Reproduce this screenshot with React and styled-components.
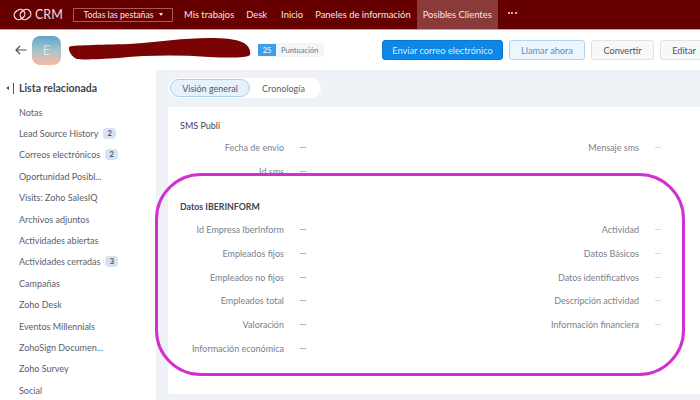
import React from 'react'
import styled, { createGlobalStyle } from 'styled-components'

const Global = createGlobalStyle`
  html, body { margin: 0; padding: 0; background: #fff; }
  * { box-sizing: border-box; }
  body { font-family: Lato, "Liberation Sans", sans-serif; }
`

const Page = styled.div`
  position: relative;
  width: 700px;
  height: 400px;
  overflow: hidden;
  display: flex;
  flex-direction: column;
`

const TopBar = styled.header`
  height: 30px;
  flex: none;
  background: #660000;
  border-bottom: 1px solid #c9a3a3;
  display: flex;
  align-items: stretch;
  padding-left: 13px;
  color: #f4e6e6;
  font-size: 9.4px;
`

const Brand = styled.div`
  display: flex;
  align-items: center;
  gap: 3px;
  width: 60px;
  flex: none;
  font-size: 12.5px;
  color: #f2dede;
  svg { display: block; }
`

const AllTabs = styled.div`
  align-self: center;
  flex: none;
  width: 100px;
  height: 14px;
  margin-right: 5px;
  border: 1px solid #a65a5a;
  display: flex;
  align-items: center;
  justify-content: center;
  gap: 5px;
  font-size: 8.7px;
  white-space: nowrap;
`

const Caret = styled.span`
  width: 0;
  height: 0;
  border-left: 2.5px solid transparent;
  border-right: 2.5px solid transparent;
  border-top: 3px solid #f4e6e6;
`

const NavItem = styled.div`
  display: flex;
  align-items: center;
  flex: none;
  padding: 0 6px;
  margin-right: ${p => p.$gap || 0}px;
  white-space: nowrap;
  background: ${p => (p.$active ? '#8b3a3a' : 'transparent')};
`

const More = styled.div`
  display: flex;
  align-items: center;
  margin: -3px 0 0 10px;
  gap: 1.5px;
  span { width: 2px; height: 2px; border-radius: 50%; background: #f4e6e6; }
`

const RecordBar = styled.div`
  height: 40px;
  flex: none;
  background: #fff;
  display: flex;
  align-items: center;
  padding-left: 15px;
`

const Back = styled.div`
  width: 17px;
  flex: none;
  color: #4a5160;
  display: flex;
  svg { display: block; }
`

const Avatar = styled.div`
  width: 29px;
  height: 29px;
  flex: none;
  border-radius: 8px;
  background: linear-gradient(180deg, #5aa5c8 0%, #a9c4c8 50%, #fbb79f 100%);
  color: rgba(255, 255, 255, 0.55);
  display: flex;
  align-items: center;
  justify-content: center;
  font-size: 13px;
`

const Blot = styled.svg`
  display: block;
  flex: none;
  margin-left: 8px;
  width: 183px;
  height: 26px;
`

const Score = styled.div`
  margin-left: 6px;
  flex: none;
  display: flex;
  align-items: center;
  height: 14px;
  background: #f2f5f9;
  border-radius: 2px;
  font-size: 7.5px;
  color: #6b7686;
  width: 66px;
`

const ScoreValue = styled.span`
  width: 18px;
  height: 12px;
  margin-right: 5px;
  background: #3d9fe8;
  color: #d9eefc;
  font-weight: 700;
  display: flex;
  align-items: center;
  justify-content: center;
`

const Actions = styled.div`
  display: flex;
  gap: 6px;
  margin-left: 58px;
  flex: none;
`

const Button = styled.div`
  height: 20px;
  width: ${p => p.$w}px;
  flex: none;
  border-radius: 3px;
  font-size: 9.2px;
  display: flex;
  align-items: center;
  justify-content: center;
  padding-right: ${p => p.$pr || 0}px;
  white-space: nowrap;
  background: ${p => p.$bg || '#f7f8fa'};
  color: ${p => p.$fg || '#4d5562'};
  border: 1px solid ${p => p.$line || '#dfe3e8'};
`

const Body = styled.div`
  flex: 1;
  display: flex;
  min-height: 0;
`

const Sidebar = styled.aside`
  width: 156px;
  flex: none;
  background: #fff;
  padding: 11px 0 0 19px;
`

const SideTitle = styled.div`
  position: relative;
  font-size: 10.5px;
  font-weight: 700;
  color: #3f4652;
  height: 15px;
  line-height: 15px;
  margin-bottom: 5.5px;
`

const Collapse = styled.span`
  position: absolute;
  left: -13px;
  top: 2px;
  width: 8px;
  height: 11px;
  border-right: 1px solid #4a5160;
  &::before {
    content: '';
    position: absolute;
    left: 0;
    top: 3px;
    border-top: 2.5px solid transparent;
    border-bottom: 2.5px solid transparent;
    border-right: 3px solid #4a5160;
  }
`

const SideItem = styled.div`
  height: 21.4px;
  display: flex;
  align-items: center;
  gap: 5px;
  font-size: 9px;
  color: #59606c;
  white-space: nowrap;
`

const Count = styled.span`
  width: 13px;
  height: 11px;
  border-radius: 4px;
  background: #d5e2f6;
  color: #47566e;
  font-size: 7.5px;
  font-weight: 700;
  display: flex;
  align-items: center;
  justify-content: center;
`

const Main = styled.main`
  flex: 1;
  background: #eef2f6;
  padding: 8px 0 6px 12px;
  display: flex;
  flex-direction: column;
  gap: 9px;
  min-width: 0;
`

const Tabs = styled.div`
  width: 153px;
  height: 20px;
  border-radius: 10px;
  background: #fff;
  display: flex;
  align-items: center;
  padding-left: 2px;
  font-size: 9px;
  color: #59606c;
  flex: none;
`

const Tab = styled.div`
  height: 18px;
  width: ${p => p.$w}px;
  border-radius: 9px;
  display: flex;
  align-items: center;
  justify-content: center;
  ${p => p.$active && 'background: #e6f1fb; border: 1px solid #a9cfe9; color: #4e5a68;'}
`

const Card = styled.section`
  flex: 1;
  background: #fff;
  border-radius: 2px 0 0 2px;
  padding: 12px 0 0 12px;
`

const SectionTitle = styled.h3`
  margin: 0 0 ${p => p.$after}px;
  font-size: ${p => (p.$bold ? 8.8 : 9)}px;
  line-height: 14px;
  font-weight: ${p => (p.$bold ? 700 : 400)};
  color: #3f4652;
`

const Dash = styled.span`
  width: 6px;
  height: 1px;
  background: #aeb3ba;
`

const Fields = styled.div`
  display: grid;
  grid-template-columns: 355px 1fr;
  grid-auto-rows: 23.8px;
  margin: 0 0 ${p => p.$after || 0}px -12px;
`

const Field = styled.div`
  display: flex;
  align-items: center;
  gap: 16px;
  font-size: 9px;
  &:nth-child(even) ${Dash} { background: #d3d6db; }
`

const Label = styled.span`
  width: 116px;
  color: #7b818c;
  white-space: nowrap;
  display: flex;
  justify-content: flex-end;
`

const Highlight = styled.div`
  position: absolute;
  left: 155px;
  top: 172.5px;
  width: 529.5px;
  height: 203px;
  border: 3px solid #d22fd0;
  border-radius: 46px;
  pointer-events: none;
`

const nav = [['Mis trabajos', 0], ['Desk', 2], ['Inicio', 0], ['Paneles de información', 0]]

const related = [
  ['Notas'],
  ['Lead Source History', 2],
  ['Correos electrónicos', 2],
  ['Oportunidad Posibl...'],
  ['Visits: Zoho SalesIQ'],
  ['Archivos adjuntos'],
  ['Actividades abiertas'],
  ['Actividades cerradas', 3],
  ['Campañas'],
  ['Zoho Desk'],
  ['Eventos Millennials'],
  ['ZohoSign Documen...'],
  ['Zoho Survey'],
  ['Social'],
]

const smsFields = ['Fecha de envio', 'Mensaje sms', 'Id sms', null]

const iberFields = [
  'Id Empresa IberInform', 'Actividad',
  'Empleados fijos', 'Datos Básicos',
  'Empleados no fijos', 'Datos identificativos',
  'Empleados total', 'Descripción actividad',
  'Valoración', 'Información financiera',
  'Información económica', null,
]

const FieldGrid = ({ items, after }) => (
  <Fields $after={after}>
    {items.map((name, i) => (
      <Field key={i}>
        {name && <Label>{name}</Label>}
        {name && <Dash />}
      </Field>
    ))}
  </Fields>
)

const App = () => (
  <Page>
    <Global />
    <TopBar>
      <Brand>
        <svg width="19" height="15" viewBox="0 0 19 15" fill="none" stroke="#f2dede" strokeWidth="1.3">
          <rect x="1" y="3" width="11" height="9" rx="4.5" transform="rotate(-35 6.5 7.5)" />
          <rect x="7" y="3" width="11" height="9" rx="4.5" transform="rotate(-35 12.5 7.5)" />
        </svg>
        CRM
      </Brand>
      <AllTabs>Todas las pestañas <Caret /></AllTabs>
      {nav.map(([name, gap]) => <NavItem key={name} $gap={gap}>{name}</NavItem>)}
      <NavItem $active>Posibles Clientes</NavItem>
      <More><span /><span /><span /></More>
    </TopBar>
    <RecordBar>
      <Back>
        <svg width="12" height="10" viewBox="0 0 12 10" fill="none" stroke="currentColor" strokeWidth="1.2">
          <path d="M11.5 5H1M5 1 1 5l4 4" />
        </svg>
      </Back>
      <Avatar>E</Avatar>
      <Blot viewBox="0 0 183 26">
        <path fill="#7a0303" d="M0 10C2 8 30 8 60 7 90 5 115 1 140 1c15 0 28 1 35 5 5 3 7 8 6 12-4 3-20 3-41 2-30-2-60-2-90 1-18 1-36 2-42 1C3 20-1 14 0 10Z" />
      </Blot>
      <Score><ScoreValue>25</ScoreValue>Puntuación</Score>
      <Actions>
        <Button $w={121} $bg="#0d87e8" $fg="#d6edfd" $line="#0b78d0">Enviar correo electrónico</Button>
        <Button $w={76} $bg="#eef6fd" $fg="#4a8fc4" $line="#b4d3e8">Llamar ahora</Button>
        <Button $w={63}>Convertir</Button>
        <Button $w={60} $pr={12}>Editar</Button>
      </Actions>
    </RecordBar>
    <Body>
      <Sidebar>
        <SideTitle><Collapse />Lista relacionada</SideTitle>
        {related.map(([name, count]) => (
          <SideItem key={name}>
            {name}
            {count && <Count>{count}</Count>}
          </SideItem>
        ))}
      </Sidebar>
      <Main>
        <Tabs>
          <Tab $active $w={80}>Visión general</Tab>
          <Tab $w={67}>Cronología</Tab>
        </Tabs>
        <Card>
          <SectionTitle $after={3}>SMS Publi</SectionTitle>
          <FieldGrid items={smsFields} after={16} />
          <SectionTitle $bold $after={4}>Datos IBERINFORM</SectionTitle>
          <FieldGrid items={iberFields} />
        </Card>
      </Main>
    </Body>
    <Highlight />
  </Page>
)

export default App
